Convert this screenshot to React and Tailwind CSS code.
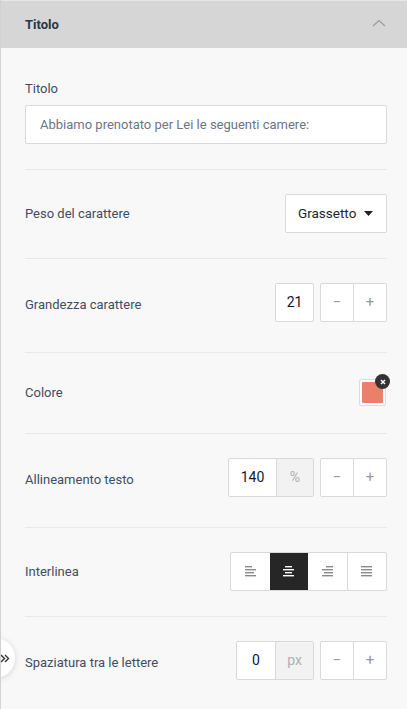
import React from "react";

const font = { fontFamily: "Roboto, 'Liberation Sans', Arial, sans-serif" };

function Label({ children, className = "" }) {
  return <div className={`text-[13px] leading-4 text-[#3f4d63] ${className}`}>{children}</div>;
}

function Stepper() {
  return (
    <div className="flex h-[39px] w-[67px] rounded-[2px] border border-[#d9d9d9] bg-white text-[#9a9a9a]">
      <div className="flex flex-1 items-center justify-center border-r border-[#d9d9d9] text-[15px]">−</div>
      <div className="flex flex-1 items-center justify-center text-[15px]">+</div>
    </div>
  );
}

function AlignIcon({ type, color }) {
  const rows = {
    left: [[0, 7], [0, 11], [0, 9], [0, 11]],
    center: [[2, 7], [0, 11], [2, 7], [0, 11]],
    right: [[4, 7], [0, 11], [2, 9], [0, 11]],
    justify: [[0, 11], [0, 11], [0, 11], [0, 11]],
  }[type];
  return (
    <svg width="11" height="11" viewBox="0 0 11 11">
      {rows.map(([x, w], i) => (
        <rect key={i} x={x} y={i * 3} width={w} height="1.4" fill={color} />
      ))}
    </svg>
  );
}

export default function App() {
  return (
    <div className="relative h-[709px] w-[407px] overflow-hidden border-l border-[#d2d2d2] bg-[#f8f8f8]" style={font}>
      <div className="flex h-12 items-center justify-between border-t border-[#e6e6e6] bg-[#d6d6d6] pl-6 pr-5">
        <div className="text-[13px] font-bold text-[#27364a]">Titolo</div>
        <svg width="14" height="8" viewBox="0 0 14 8" className="mr-[1px] mb-[3px]">
          <path d="M1 7 L7 1.5 L13 7" fill="none" stroke="#9c9c9c" strokeWidth="1.2" />
        </svg>
      </div>

      <div className="pl-6 pr-5">
        <div className="border-b border-[#e8e8e8] pt-[33px] pb-[25px]">
          <Label>Titolo</Label>
          <div className="mt-2 flex h-[39px] items-center rounded-[2px] border border-[#d9d9d9] bg-white px-[14px] text-[13px] text-[#6b7585]">
            Abbiamo prenotato per Lei le seguenti camere:
          </div>
        </div>

        <div className="flex items-center justify-between border-b border-[#e8e8e8] pt-6 pb-[25px]">
          <Label>Peso del carattere</Label>
          <div className="flex h-[39px] w-[102px] items-center justify-between rounded-[2px] border border-[#d9d9d9] bg-white pl-3 pr-[13px] text-[13.5px] text-[#1d2535]">
            <span>Grassetto</span>
            <svg width="9" height="5" viewBox="0 0 9 5"><path d="M0 0 H9 L4.5 5 Z" fill="#222" /></svg>
          </div>
        </div>

        <div className="flex items-center justify-between border-b border-[#e8e8e8] pt-6 pb-[30px]">
          <Label className="mt-[5px]">Grandezza carattere</Label>
          <div className="flex gap-[6px]">
            <div className="flex h-[39px] w-[39px] items-center justify-center rounded-[2px] border border-[#d9d9d9] bg-white text-[14px] text-[#0d1a3a]">21</div>
            <Stepper />
          </div>
        </div>

        <div className="flex items-center justify-between border-b border-[#e8e8e8] pt-[26px] pb-[27px]">
          <Label>Colore</Label>
          <div className="relative mr-[1px] h-[27px] w-[27px] rounded-[2px] border border-[#dcdcdc] bg-white p-[2px]">
            <div className="h-full w-full rounded-[1px] bg-[#e9806a]" />
            <div className="absolute -right-[5px] -top-[6px] flex h-[15px] w-[15px] items-center justify-center rounded-full bg-[#333]">
              <svg width="6" height="6" viewBox="0 0 6 6"><path d="M1 1 L5 5 M5 1 L1 5" stroke="white" strokeWidth="1.4" /></svg>
            </div>
          </div>
        </div>

        <div className="flex items-center justify-between border-b border-[#e8e8e8] pt-6 pb-[30px]">
          <Label className="mt-[5px]">Allineamento testo</Label>
          <div className="flex gap-[6px]">
            <div className="flex h-[39px] w-[86px] rounded-[2px] border border-[#d9d9d9] bg-white">
              <div className="flex w-[48px] items-center justify-center border-r border-[#d9d9d9] text-[14px] text-[#0d1a3a]">140</div>
              <div className="flex flex-1 items-center justify-center bg-[#f2f2f2] text-[14px] text-[#b0b0b0]">%</div>
            </div>
            <Stepper />
          </div>
        </div>

        <div className="flex items-center justify-between border-b border-[#e8e8e8] pt-6 pb-[25px]">
          <Label>Interlinea</Label>
          <div className="flex h-[39px] w-[157px] rounded-[2px] border border-[#d9d9d9] bg-white">
            <div className="flex flex-1 items-center justify-center"><AlignIcon type="left" color="#8a8a8a" /></div>
            <div className="flex flex-1 items-center justify-center bg-[#262626]"><AlignIcon type="center" color="#ffffff" /></div>
            <div className="flex flex-1 items-center justify-center border-r border-[#d9d9d9]"><AlignIcon type="right" color="#8a8a8a" /></div>
            <div className="flex flex-1 items-center justify-center"><AlignIcon type="justify" color="#8a8a8a" /></div>
          </div>
        </div>

        <div className="flex items-center justify-between pt-6">
          <Label className="mt-[5px]">Spaziatura tra le lettere</Label>
          <div className="flex gap-[6px]">
            <div className="flex h-[39px] w-[78px] rounded-[2px] border border-[#d9d9d9] bg-white">
              <div className="flex w-[39px] items-center justify-center border-r border-[#d9d9d9] text-[14px] text-[#0d1a3a]">0</div>
              <div className="flex flex-1 items-center justify-center bg-[#f2f2f2] text-[14px] text-[#b0b0b0]">px</div>
            </div>
            <Stepper />
          </div>
        </div>
      </div>

      <div className="absolute -left-[26px] top-[638px] flex h-[40px] w-[40px] items-center justify-end rounded-full bg-white pr-[5px] shadow-[0_1px_6px_rgba(0,0,0,0.15)]">
        <svg width="10" height="9" viewBox="0 0 10 9">
          <path d="M1 1 L4.5 4.5 L1 8 M5 1 L8.5 4.5 L5 8" fill="none" stroke="#333" strokeWidth="1.4" />
        </svg>
      </div>
    </div>
  );
}
